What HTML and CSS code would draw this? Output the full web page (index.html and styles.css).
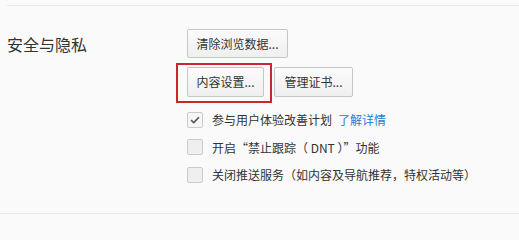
FILE: index.html
```html
<!DOCTYPE html>
<html lang="zh-CN">
<head>
<meta charset="utf-8">
<title>安全与隐私</title>
<link rel="stylesheet" href="styles.css">
</head>
<body>
<div class="rule"></div>
<section class="section">
  <h3 class="section-title">安全与隐私</h3>
  <div class="section-body">
    <div class="btn-row">
      <button class="btn btn-clear">清除浏览数据...</button>
    </div>
    <div class="btn-row">
      <span class="highlight-wrap">
        <button class="btn btn-content">内容设置...</button>
        <span class="highlight"></span>
      </span>
      <button class="btn btn-cert">管理证书...</button>
    </div>
    <div class="checks">
      <label class="check-row">
        <span class="box checked">
          <svg viewBox="0 0 16 16" width="16" height="16"><polyline points="3.5,8.2 6.6,11 12.5,4.8" fill="none" stroke="#555" stroke-width="1.8"/></svg>
        </span>
        <span class="check-text">参与用户体验改善计划</span>
        <a class="more" href="#">了解详情</a>
      </label>
      <label class="check-row">
        <span class="box"></span>
        <span class="check-text">开启“禁止跟踪（ DNT ）”功能</span>
      </label>
      <label class="check-row">
        <span class="box"></span>
        <span class="check-text">关闭推送服务（如内容及导航推荐，特权活动等）</span>
      </label>
    </div>
  </div>
</section>
<div class="rule rule-bottom"></div>
</body>
</html>
```

FILE: styles.css
```css
html, body {
  margin: 0;
  padding: 0;
}
body {
  background: #fafafa;
  width: 519px;
  height: 216px;
  overflow: hidden;
  font-family: "Noto Sans CJK SC", "Liberation Sans", sans-serif;
  color: #333;
}
.rule {
  margin-left: 7px;
  margin-top: 5px;
  height: 0;
  border-top: 1px solid #e9e9e9;
}
.rule-bottom {
  margin-top: 0;
  margin-left: 0;
}
.section {
  display: flex;
  height: 207px;
  box-sizing: border-box;
  padding-left: 7px;
}
.section-title {
  margin: 0;
  width: 180px;
  flex: none;
  font-size: 16px;
  font-weight: normal;
  line-height: 22px;
  padding-top: 27px;
  color: #333;
}
.section-body {
  display: flex;
  flex-direction: column;
  padding-top: 23px;
}
.btn-row {
  display: flex;
  gap: 10px;
  margin-bottom: 9px;
}
.btn {
  height: 30px;
  box-sizing: border-box;
  padding: 0;
  white-space: nowrap;
  text-align: center;
  border: 1px solid #c6c6c6;
  border-radius: 2px;
  background: linear-gradient(#fbfbfb, #efefef);
  font-family: "Noto Sans CJK SC", "Liberation Sans", sans-serif;
  font-size: 12px;
  color: #333;
  line-height: 28px;
}
.btn-clear {
  width: 101px;
  height: 29px;
  line-height: 27px;
}
.btn-content {
  width: 77px;
}
.btn-cert {
  width: 79px;
}
.highlight-wrap {
  position: relative;
  display: inline-flex;
}
.highlight {
  position: absolute;
  left: -11px;
  top: -4px;
  width: 96px;
  height: 40px;
  box-sizing: border-box;
  border: 2px solid #c9262e;
  pointer-events: none;
}
.checks {
  display: flex;
  flex-direction: column;
  margin-top: 0;
}
.check-row {
  display: flex;
  align-items: center;
  height: 27.5px;
  font-size: 12px;
  color: #333;
  white-space: nowrap;
}
.box {
  width: 16px;
  height: 16px;
  box-sizing: border-box;
  border: 1px solid #cbcbcb;
  border-radius: 2px;
  background: #efefef;
  margin-right: 9px;
  display: flex;
  align-items: center;
  justify-content: center;
}
.box.checked {
  background: #f6f6f6;
}
.box svg {
  display: block;
}
.more {
  margin-left: 6px;
  color: #2a7bd4;
  text-decoration: none;
}
```
